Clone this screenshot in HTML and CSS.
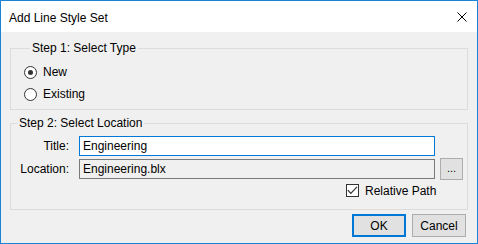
FILE: index.html
```html
<!DOCTYPE html>
<html>
<head>
<meta charset="utf-8">
<link rel="stylesheet" href="styles.css">
</head>
<body>
<div class="window">
  <div class="titlebar">
    <span class="title">Add Line Style Set</span>
    <svg class="close" width="10" height="10" viewBox="0 0 10 10"><path d="M0.5 0.5 L9.5 9.5 M9.5 0.5 L0.5 9.5" stroke="#000" stroke-width="1" fill="none"/></svg>
  </div>
  <div class="content">
    <fieldset class="group g1">
      <legend>Step 1: Select Type</legend>
      <div class="radio-row"><span class="radio checked"></span><span>New</span></div>
      <div class="radio-row"><span class="radio"></span><span>Existing</span></div>
    </fieldset>
    <fieldset class="group g2">
      <legend>Step 2: Select Location</legend>
      <div class="field-row r1">
        <span class="label">Title:</span>
        <div class="input active">Engineering</div>
      </div>
      <div class="field-row r2">
        <span class="label">Location:</span>
        <div class="input readonly">Engineering.blx</div>
        <div class="btn browse">...</div>
      </div>
      <div class="check-row">
        <span class="checkbox"><svg width="11" height="11" viewBox="0 0 11 11"><path d="M0.8 5.2 L3.8 8.4 L10 1.8" stroke="#333" stroke-width="1.2" fill="none"/></svg></span>
        <span>Relative Path</span>
      </div>
    </fieldset>
    <div class="footer">
      <div class="btn action default">OK</div>
      <div class="btn action">Cancel</div>
    </div>
  </div>
</div>
</body>
</html>
```
FILE: styles.css
```css
* { box-sizing: border-box; }
html, body { margin: 0; padding: 0; background: #fff; }
body { font-family: "Liberation Sans", Arial, sans-serif; font-size: 12px; color: #000; }
.window {
  width: 478px; height: 244px;
  border: 1px solid #1883d7;
  background: #f0f0f0;
  display: flex; flex-direction: column;
}
.titlebar {
  height: 31px; background: #fff;
  display: flex; align-items: center; justify-content: space-between;
  padding: 0 10px 0 8px;
}
.title { font-size: 12px; line-height: 14px; margin-top: 2px; }
.close { display: block; }
.content { flex: 1; padding: 9px 10px 0 9px; display: flex; flex-direction: column; }
.group {
  margin: 0; padding: 0; min-width: 0;
  border: 1px solid #dcdcdc;
  width: 458px;
}
.group legend { padding: 0 2px; margin-left: 6px; line-height: 14px; font-size: 12px; }
.g1 { padding: 6px 0 4px 13px; }
.g2 { margin-top: 6px; padding: 6px 0 12px 0; }
.radio-row { display: flex; align-items: center; height: 22px; gap: 6px; }
.radio {
  width: 13px; height: 13px; border: 1px solid #333; border-radius: 50%;
  background: #fff; display: flex; align-items: center; justify-content: center;
}
.radio.checked::after { content: ""; width: 5px; height: 5px; border-radius: 50%; background: #333; }
.field-row { display: flex; align-items: center; }
.r1 { height: 20px; }
.r2 { height: 22px; margin-top: 2px; }
.label { width: 58px; text-align: right; margin-right: 10px; }
.input {
  width: 356px; height: 20px; padding: 0 3px; line-height: 18px;
  border: 1px solid #7a7a7a;
}
.input.active { border-color: #0078d7; background: #fff; }
.input.readonly { background: #f0f0f0; }
.btn {
  background: #e1e1e1; border: 1px solid #adadad;
  display: flex; align-items: center; justify-content: center;
}
.browse { width: 23px; height: 22px; margin-left: 5px; font-size: 11px; padding-bottom: 2px; }
.check-row { display: flex; align-items: center; height: 13px; margin-top: 4px; padding-left: 335px; gap: 6px; }
.checkbox { width: 13px; height: 13px; border: 1px solid #333; background: #fff; display: flex; align-items: center; justify-content: center; }
.checkbox svg { display: block; }
.footer { display: flex; justify-content: flex-end; gap: 6px; margin-top: 4px; padding-right: 1px; }
.action { width: 54px; height: 23px; }
.action.default { border: 2px solid #0078d7; }
```
